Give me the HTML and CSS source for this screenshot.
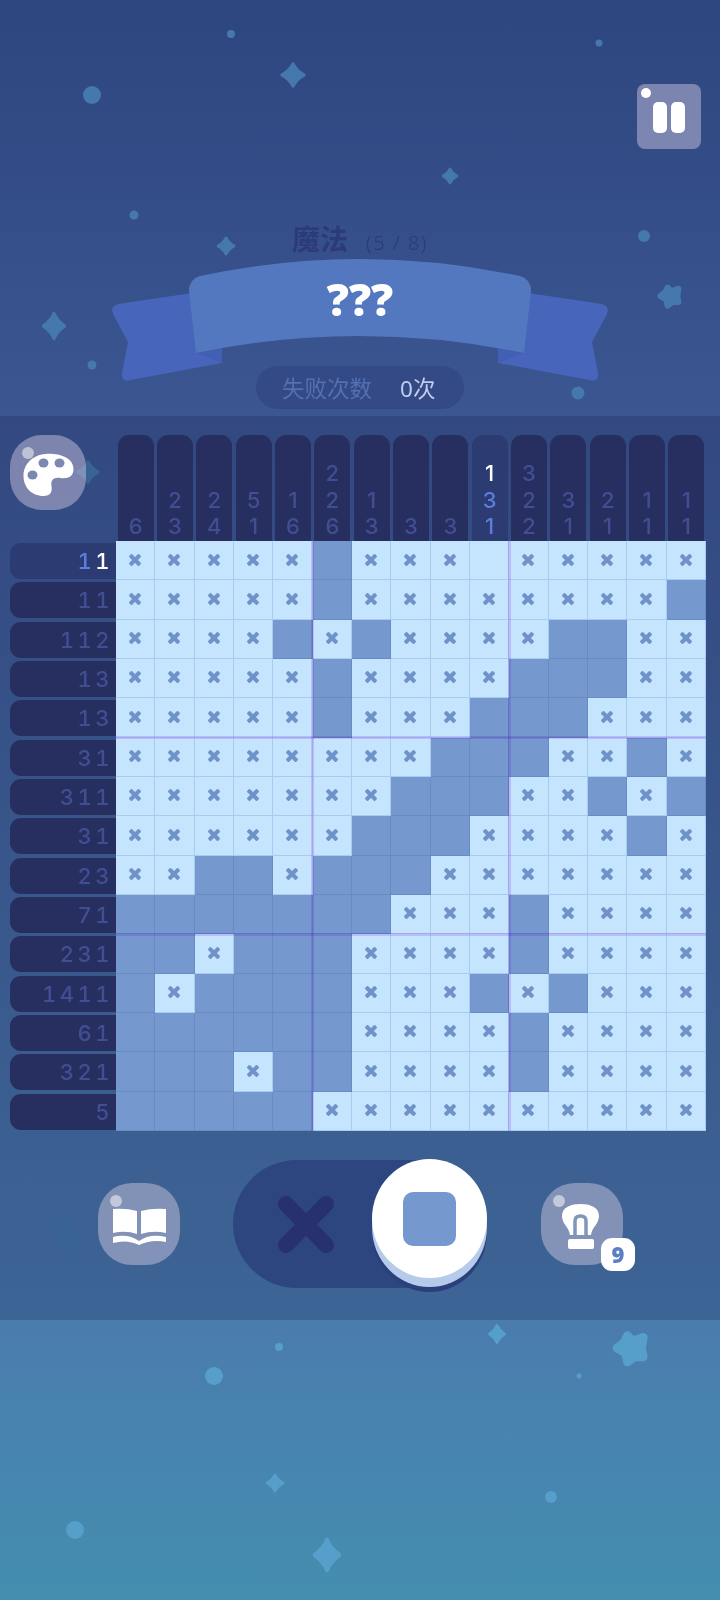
FILE: index.html
```html
<!DOCTYPE html>
<html lang="zh">
<head>
    <meta charset="UTF-8">
    <title>Nonogram</title>
    <link rel="stylesheet" href="styles.css">
</head>
<body>
<div class="page">
    <!-- Background dots and sparkles -->
    <svg class="stars" width="720" height="1600" viewBox="0 0 720 1600">
        <defs>
            <path id="spark" d="M0 -9 C2 -5 4.500 -2.500 9 0 C4.500 2.500 2 5 0 9 C-2 5 -4.500 2.500 -9 0 C-4.500 -2.500 -2 -5 0 -9Z"/>
            <path id="puff" d="M-2 -7 L1 -4 L7 -6 L6 0 L7 5 L2 5 L-2 8 L-3 3 L-8 0 L-4 -3Z"/>
        </defs>
        <g class="stars-top">
            <circle cx="231" cy="34" r="4"/>
            <circle cx="599" cy="43" r="3.5"/>
            <circle cx="92" cy="95" r="9"/>
            <circle cx="134" cy="215" r="4.5"/>
            <circle cx="644" cy="236" r="6"/>
            <circle cx="92" cy="365" r="4.5"/>
            <circle cx="578" cy="393" r="6.5"/>
            <circle cx="29" cy="1180" r="3.5"/>
            <use href="#spark" transform="translate(293 75) scale(1.2)"/>
            <use href="#spark" transform="translate(450 176) scale(.8)"/>
            <use href="#spark" transform="translate(226 246) scale(.9)"/>
            <use href="#spark" transform="translate(54 326) scale(1.15 1.35)"/>
            <use href="#spark" transform="translate(88 472) scale(1.1)"/>
            <use href="#spark" transform="translate(67 1235) scale(1.3 1.6)"/>
            <use class="puff" href="#puff" transform="translate(670 296) scale(1.2)"/>
        </g>
        <g class="stars-bottom">
            <circle cx="279" cy="1347" r="4"/>
            <circle cx="214" cy="1376" r="9"/>
            <circle cx="579" cy="1376" r="2.5"/>
            <circle cx="551" cy="1497" r="6"/>
            <circle cx="75" cy="1530" r="9"/>
            <use href="#spark" transform="translate(497 1334) scale(.85 .95)"/>
            <use href="#spark" transform="translate(275 1483) scale(.9)"/>
            <use href="#spark" transform="translate(327 1555) scale(1.35 1.65)"/>
            <use class="puff" href="#puff" transform="translate(631 1348) scale(1.75)"/>
        </g>
    </svg>

    <header class="top">
        <button class="pause">
            <span class="shine shine-bright"></span>
            <span class="pause-bar"></span>
            <span class="pause-bar"></span>
        </button>
        <div class="title">
            <span class="title-name">魔法</span>
            <span class="title-count">(5 / 8)</span>
        </div>
        <div class="ribbon">
            <svg class="ribbon-art" width="720" height="125" viewBox="0 255 720 125">
                <g id="tail">
                    <path class="tail" d="M192 293 L118 304 Q110 306 113 314 L128 342 L122 373 Q121 383 131 380 L222 363 L222 340Z"/>
                    <path class="fold" d="M196 353 L222 363 L222 345Z"/>
                </g>
                <use href="#tail" transform="translate(720 0) scale(-1 1)"/>
                <path class="band" d="M189 291 Q189 279 200 276 Q360 242 520 276 Q531 279 531 291 L524 353 Q360 319 196 353Z"/>
            </svg>
            <span class="ribbon-text">???</span>
        </div>
        <div class="fails">
            <span class="fails-label">失败次数</span>
            <span class="fails-value">0次</span>
        </div>
    </header>

    <main class="play">
        <div class="board">
            <div class="corner">
                <button class="palette">
                    <span class="shine"></span>
                    <svg width="76" height="75" viewBox="0 0 76 75">
                        <path fill="#fff" d="M35.5 19 C47.5 18 63.5 22 63.5 34 C63.5 42 57.5 44 50.5 43 C43.5 42 40.5 45 41.5 51 C42.5 57 40.5 61 33.5 61 C21.5 61 13.5 52 13.5 41 C13.5 29 22.5 20 35.5 19Z"/>
                        <ellipse class="hole" cx="33.5" cy="28" rx="5" ry="4.5"/>
                        <ellipse class="hole" cx="49.5" cy="28" rx="5" ry="4.5"/>
                        <ellipse class="hole" cx="22.5" cy="40" rx="5" ry="4.5"/>
                    </svg>
                </button>
            </div>

            <div class="col-clues">
                <div class="col-clue"><span>6</span></div>
                <div class="col-clue"><span>2</span><span>3</span></div>
                <div class="col-clue"><span>2</span><span>4</span></div>
                <div class="col-clue"><span>5</span><span>1</span></div>
                <div class="col-clue"><span>1</span><span>6</span></div>
                <div class="col-clue"><span>2</span><span>2</span><span>6</span></div>
                <div class="col-clue"><span>1</span><span>3</span></div>
                <div class="col-clue"><span>3</span></div>
                <div class="col-clue"><span>3</span></div>
                <div class="col-clue active"><span class="done">1</span><span class="lit">3</span><span class="lit">1</span></div>
                <div class="col-clue"><span>3</span><span>2</span><span>2</span></div>
                <div class="col-clue"><span>3</span><span>1</span></div>
                <div class="col-clue"><span>2</span><span>1</span></div>
                <div class="col-clue"><span>1</span><span>1</span></div>
                <div class="col-clue"><span>1</span><span>1</span></div>
            </div>

            <div class="row-clues">
                <div class="row-clue active"><span class="lit">1</span><span class="done">1</span></div>
                <div class="row-clue">11</div>
                <div class="row-clue">112</div>
                <div class="row-clue">13</div>
                <div class="row-clue">13</div>
                <div class="row-clue">31</div>
                <div class="row-clue">311</div>
                <div class="row-clue">31</div>
                <div class="row-clue">23</div>
                <div class="row-clue">71</div>
                <div class="row-clue">231</div>
                <div class="row-clue">1411</div>
                <div class="row-clue">61</div>
                <div class="row-clue">321</div>
                <div class="row-clue">5</div>
            </div>

            <div class="grid">
                <i class="x"></i><i class="x"></i><i class="x"></i><i class="x"></i><i class="x"></i><i class="f"></i><i class="x"></i><i class="x"></i><i class="x"></i><i></i><i class="x"></i><i class="x"></i><i class="x"></i><i class="x"></i><i class="x"></i>
                <i class="x"></i><i class="x"></i><i class="x"></i><i class="x"></i><i class="x"></i><i class="f"></i><i class="x"></i><i class="x"></i><i class="x"></i><i class="x"></i><i class="x"></i><i class="x"></i><i class="x"></i><i class="x"></i><i class="f"></i>
                <i class="x"></i><i class="x"></i><i class="x"></i><i class="x"></i><i class="f"></i><i class="x"></i><i class="f"></i><i class="x"></i><i class="x"></i><i class="x"></i><i class="x"></i><i class="f"></i><i class="f"></i><i class="x"></i><i class="x"></i>
                <i class="x"></i><i class="x"></i><i class="x"></i><i class="x"></i><i class="x"></i><i class="f"></i><i class="x"></i><i class="x"></i><i class="x"></i><i class="x"></i><i class="f"></i><i class="f"></i><i class="f"></i><i class="x"></i><i class="x"></i>
                <i class="x"></i><i class="x"></i><i class="x"></i><i class="x"></i><i class="x"></i><i class="f"></i><i class="x"></i><i class="x"></i><i class="x"></i><i class="f"></i><i class="f"></i><i class="f"></i><i class="x"></i><i class="x"></i><i class="x"></i>
                <i class="x"></i><i class="x"></i><i class="x"></i><i class="x"></i><i class="x"></i><i class="x"></i><i class="x"></i><i class="x"></i><i class="f"></i><i class="f"></i><i class="f"></i><i class="x"></i><i class="x"></i><i class="f"></i><i class="x"></i>
                <i class="x"></i><i class="x"></i><i class="x"></i><i class="x"></i><i class="x"></i><i class="x"></i><i class="x"></i><i class="f"></i><i class="f"></i><i class="f"></i><i class="x"></i><i class="x"></i><i class="f"></i><i class="x"></i><i class="f"></i>
                <i class="x"></i><i class="x"></i><i class="x"></i><i class="x"></i><i class="x"></i><i class="x"></i><i class="f"></i><i class="f"></i><i class="f"></i><i class="x"></i><i class="x"></i><i class="x"></i><i class="x"></i><i class="f"></i><i class="x"></i>
                <i class="x"></i><i class="x"></i><i class="f"></i><i class="f"></i><i class="x"></i><i class="f"></i><i class="f"></i><i class="f"></i><i class="x"></i><i class="x"></i><i class="x"></i><i class="x"></i><i class="x"></i><i class="x"></i><i class="x"></i>
                <i class="f"></i><i class="f"></i><i class="f"></i><i class="f"></i><i class="f"></i><i class="f"></i><i class="f"></i><i class="x"></i><i class="x"></i><i class="x"></i><i class="f"></i><i class="x"></i><i class="x"></i><i class="x"></i><i class="x"></i>
                <i class="f"></i><i class="f"></i><i class="x"></i><i class="f"></i><i class="f"></i><i class="f"></i><i class="x"></i><i class="x"></i><i class="x"></i><i class="x"></i><i class="f"></i><i class="x"></i><i class="x"></i><i class="x"></i><i class="x"></i>
                <i class="f"></i><i class="x"></i><i class="f"></i><i class="f"></i><i class="f"></i><i class="f"></i><i class="x"></i><i class="x"></i><i class="x"></i><i class="f"></i><i class="x"></i><i class="f"></i><i class="x"></i><i class="x"></i><i class="x"></i>
                <i class="f"></i><i class="f"></i><i class="f"></i><i class="f"></i><i class="f"></i><i class="f"></i><i class="x"></i><i class="x"></i><i class="x"></i><i class="x"></i><i class="f"></i><i class="x"></i><i class="x"></i><i class="x"></i><i class="x"></i>
                <i class="f"></i><i class="f"></i><i class="f"></i><i class="x"></i><i class="f"></i><i class="f"></i><i class="x"></i><i class="x"></i><i class="x"></i><i class="x"></i><i class="f"></i><i class="x"></i><i class="x"></i><i class="x"></i><i class="x"></i>
                <i class="f"></i><i class="f"></i><i class="f"></i><i class="f"></i><i class="f"></i><i class="x"></i><i class="x"></i><i class="x"></i><i class="x"></i><i class="x"></i><i class="x"></i><i class="x"></i><i class="x"></i><i class="x"></i><i class="x"></i>

                <!-- Heavier lines every five cells -->
                <span class="major major-v major-1"></span>
                <span class="major major-v major-2"></span>
                <span class="major major-h major-1"></span>
                <span class="major major-h major-2"></span>
            </div>
        </div>

        <div class="controls">
            <button class="tool">
                <span class="shine"></span>
                <svg width="82" height="82" viewBox="0 0 82 82">
                    <path fill="#fff" d="M15 26 Q28 25 39 28 L39 51 Q28 47 15 50Z"/>
                    <path fill="#fff" d="M43 28 Q54 25 68 26 L68 50 Q55 47 43 51Z"/>
                    <path fill="#fff" d="M15 54 Q30 50 41 58 Q52 50 68 54 L68 59 Q54 56 41 62 Q29 56 15 60Z"/>
                </svg>
            </button>

            <div class="toggle">
                <svg class="toggle-x" width="56" height="57" viewBox="0 0 56 57">
                    <path d="M8 8 L48 49 M48 8 L8 49"/>
                </svg>
                <div class="knob"><span class="knob-fill"></span></div>
            </div>

            <button class="tool tool-hint">
                <span class="shine"></span>
                <svg width="82" height="82" viewBox="0 0 82 82">
                    <path fill="#fff" d="M21 33 C21 24 30 21 39.500 21 C49 21 58 24 58 33 C58 41 51 44 50 52 L29 52 C28 44 21 41 21 33Z"/>
                    <path class="bulb-arch" d="M34 52 L34 38 Q34 33 39.500 33 Q45 33 45 38 L45 52"/>
                    <rect fill="#fff" x="27" y="56" width="26" height="10" rx="2"/>
                </svg>
                <span class="badge">9</span>
            </button>
        </div>
    </main>
</div>
</body>
</html>
```

FILE: styles.css
```css
* {
    box-sizing: border-box;
}

body {
    margin: 0;
    font-family: "Noto Sans", "Noto Sans CJK SC", sans-serif;
}

button {
    padding: 0;
    border: 0;
    font: inherit;
}

/* Page background */
.page {
    position: relative;
    z-index: 0;
    width: 720px;
    height: 1600px;
    overflow: hidden;
    background: linear-gradient(#2d4680 0, #3c5691 416px, #4a7cad 1320px, #448eb0 1600px);
}

.stars {
    position: absolute;
    left: 0; top: 0;
    z-index: -1;
}

.stars-top {
    fill: #4579ad;
    stroke: #4579ad;
    stroke-width: 3;
    stroke-linejoin: round;
}

.stars-bottom {
    fill: #559fca;
    stroke: #559fca;
    stroke-width: 3;
    stroke-linejoin: round;
}

.stars circle {
    stroke: none;
}

.puff {
    stroke-width: 5;
}

/* Header */
.top {
    height: 416px;
    padding-top: 84px;
    display: flex;
    flex-direction: column;
    align-items: center;
}

.shine {
    position: absolute;
    left: 12px; top: 12px;
    width: 12px;
    height: 12px;
    border-radius: 50%;
    background: rgba(255,255,255,0.5);
}

.shine-bright {
    left: 4px; top: 4px;
    width: 10px;
    height: 10px;
    background: #fff;
}

.pause {
    position: relative;
    align-self: flex-end;
    margin-right: 19px;
    width: 64px;
    height: 65px;
    padding-top: 18px;
    border-radius: 8px;
    background: rgba(214,206,228,0.45);
    display: flex;
    justify-content: center;
    gap: 4px;
}

.pause-bar {
    width: 14px;
    height: 31px;
    border-radius: 5px;
    background: #fff;
}

.title {
    margin-top: 75px;
    height: 31px;
    display: flex;
    align-items: center;
    gap: 18px;
    color: #2c3a78;
}

.title-name {
    font-size: 28px;
    font-weight: 700;
    line-height: 31px;
}

.title-count {
    font-size: 20px;
    font-weight: 300;
    line-height: 31px;
    padding-top: 5px;
    letter-spacing: 1.5px;
}

.ribbon {
    position: relative;
    width: 720px;
    height: 111px;
}

.ribbon-art {
    display: block;
    overflow: visible;
}

.tail {
    fill: #4765bb;
}

.fold {
    fill: #4160b3;
}

.band {
    fill: #5478bf;
}

.ribbon-text {
    position: absolute;
    left: 0; top: 14px;
    width: 100%;
    text-align: center;
    color: #fff;
    font-size: 44px;
    font-weight: 900;
    line-height: 60px;
}

.fails {
    width: 208px;
    height: 43px;
    padding-left: 26px;
    border-radius: 22px;
    background: #344a87;
    display: flex;
    align-items: center;
    gap: 28px;
    font-size: 22.5px;
}

.fails-label {
    color: #5570b0;
}

.fails-value {
    color: #c0cdee;
}

/* Board band */
.play {
    height: 904px;
    padding: 19px 0 0 10px;
    background: rgba(25,30,80,0.25);
}

.board {
    display: grid;
    grid-template-columns: 106px 590px;
    grid-template-rows: 106px 590px;
}

.palette {
    position: relative;
    display: block;
    width: 76px;
    height: 75px;
    border-radius: 32px;
    background: rgba(214,206,228,0.45);
}

.palette svg {
    display: block;
}

.hole {
    fill: #7a88b2;
}

.col-clues {
    display: grid;
    grid-template-columns: repeat(15, 1fr);
}

.col-clue {
    margin: 0 1.67px;
    padding-bottom: 1px;
    border-radius: 11px 11px 0 0;
    background: #272f60;
    display: flex;
    flex-direction: column;
    justify-content: flex-end;
    align-items: center;
    color: #414f92;
    font-family: Inter, sans-serif;
    font-size: 22px;
    font-weight: 500;
    line-height: 26.7px;
}

.row-clues {
    display: grid;
    grid-template-rows: repeat(15, 1fr);
}

.row-clue {
    margin: 2px 0 1.33px;
    padding-right: 3px;
    border-radius: 11px 0 0 11px;
    background: #272f60;
    display: flex;
    justify-content: flex-end;
    align-items: center;
    color: #414f92;
    font-family: Inter, sans-serif;
    font-size: 22px;
    font-weight: 500;
    font-variant-numeric: tabular-nums;
    letter-spacing: 3.5px;
}

.col-clue.active,
.row-clue.active {
    background: #2c3b72;
}

.lit {
    color: #5b7ddb;
}

.done {
    color: #fff;
}

/* Cells */
.grid {
    position: relative;
    display: grid;
    grid-template-columns: repeat(15, 1fr);
    grid-template-rows: repeat(15, 1fr);
}

.grid i {
    position: relative;
    display: block;
    background: #c5e4fd;
    border-right: 1.5px solid #a9cbf0;
    border-bottom: 1.5px solid #a9cbf0;
}

.grid i.f {
    background: #7599cf;
    border-color: #678bc3;
}

.x::before,
.x::after {
    content: "";
    position: absolute;
    left: 12px; top: 16.500px;
    width: 14px;
    height: 4px;
    border-radius: 1px;
    background: #6f93c9;
    transform: rotate(45deg);
}

.x::after {
    transform: rotate(-45deg);
}

.major {
    position: absolute;
    background: #f0d4fc;
    mix-blend-mode: multiply;
}

.major-v {
    top: 0; bottom: 0;
    width: 3px;
}

.major-h {
    left: 0; right: 0;
    height: 3px;
}

.major-v.major-1 { left: 195.17px; }
.major-v.major-2 { left: 391.83px; }
.major-h.major-1 { top: 195.17px; }
.major-h.major-2 { top: 391.83px; }

/* Bottom controls */
.controls {
    margin: 29px 0 0 88px;
    display: flex;
    align-items: center;
}

.tool {
    position: relative;
    width: 82px;
    height: 82px;
    border-radius: 34px;
    background: rgba(214,206,228,0.45);
}

.tool svg {
    display: block;
}

.tool-hint {
    margin-left: 60px;
}

.bulb-arch {
    fill: none;
    stroke: #8097b9;
    stroke-width: 3.5;
}

.badge {
    position: absolute;
    left: 60px; top: 55px;
    width: 34px;
    height: 33px;
    border-radius: 11px;
    background: #fff;
    color: #5c7fc4;
    font-size: 22px;
    font-weight: 900;
    line-height: 33px;
    text-align: center;
}

.toggle {
    position: relative;
    margin-left: 53px;
    width: 248px;
    height: 128px;
    padding-left: 45px;
    border-radius: 64px;
    background: #2d4680;
    display: flex;
    align-items: center;
}

.toggle-x path {
    fill: none;
    stroke: #28316f;
    stroke-width: 16;
    stroke-linecap: round;
}

.knob {
    position: absolute;
    left: 139px; top: -1px;
    width: 115px;
    height: 119px;
    border-radius: 50%;
    background: #fff;
    box-shadow: 0 9px 0 #b5cbe9, 0 14px 0 #2a3f7c;
    display: flex;
    justify-content: center;
    align-items: center;
}

.knob-fill {
    width: 53px;
    height: 54px;
    border-radius: 10px;
    background: #7599cf;
}
```
